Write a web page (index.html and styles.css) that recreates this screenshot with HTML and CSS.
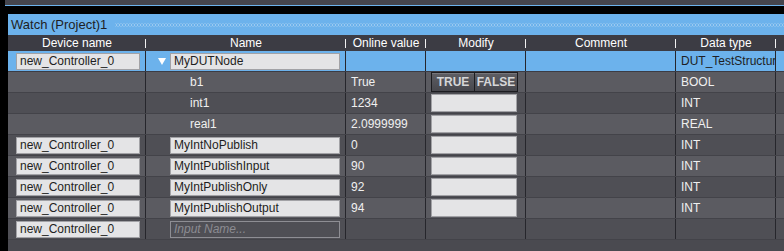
FILE: index.html
```html
<!DOCTYPE html>
<html>
<head>
    <title>Watch (Project)1</title>
    <link rel="stylesheet" href="styles.css">
</head>
<body>
    <div class="topbar"></div>
    <div class="watch">
        <div class="title">
            <span>Watch (Project)1</span>
            <div class="grip"></div>
        </div>

        <div class="row head">
            <div class="cell">Device name</div>
            <div class="cell">Name</div>
            <div class="cell">Online value</div>
            <div class="cell">Modify</div>
            <div class="cell">Comment</div>
            <div class="cell">Data type</div>
            <div class="cell"></div>
        </div>

        <div class="row selected">
            <div class="cell"><div class="box dev">new_Controller_0</div></div>
            <div class="cell name"><span class="tri"></span><div class="box nm">MyDUTNode</div></div>
            <div class="cell"></div>
            <div class="cell"></div>
            <div class="cell"></div>
            <div class="cell type">DUT_TestStructure</div>
            <div class="cell"></div>
        </div>

        <div class="row light">
            <div class="cell"></div>
            <div class="cell child">b1</div>
            <div class="cell val">True</div>
            <div class="cell mod">
                <button class="btn">TRUE</button><button class="btn">FALSE</button>
            </div>
            <div class="cell"></div>
            <div class="cell type">BOOL</div>
            <div class="cell"></div>
        </div>

        <div class="row dark">
            <div class="cell"></div>
            <div class="cell child">int1</div>
            <div class="cell val">1234</div>
            <div class="cell mod"><div class="box edit"></div></div>
            <div class="cell"></div>
            <div class="cell type">INT</div>
            <div class="cell"></div>
        </div>

        <div class="row light">
            <div class="cell"></div>
            <div class="cell child">real1</div>
            <div class="cell val">2.0999999</div>
            <div class="cell mod"><div class="box edit"></div></div>
            <div class="cell"></div>
            <div class="cell type">REAL</div>
            <div class="cell"></div>
        </div>

        <div class="row dark">
            <div class="cell"><div class="box dev">new_Controller_0</div></div>
            <div class="cell name"><div class="box nm">MyIntNoPublish</div></div>
            <div class="cell val">0</div>
            <div class="cell mod"><div class="box edit"></div></div>
            <div class="cell"></div>
            <div class="cell type">INT</div>
            <div class="cell"></div>
        </div>

        <div class="row light">
            <div class="cell"><div class="box dev">new_Controller_0</div></div>
            <div class="cell name"><div class="box nm">MyIntPublishInput</div></div>
            <div class="cell val">90</div>
            <div class="cell mod"><div class="box edit"></div></div>
            <div class="cell"></div>
            <div class="cell type">INT</div>
            <div class="cell"></div>
        </div>

        <div class="row dark">
            <div class="cell"><div class="box dev">new_Controller_0</div></div>
            <div class="cell name"><div class="box nm">MyIntPublishOnly</div></div>
            <div class="cell val">92</div>
            <div class="cell mod"><div class="box edit"></div></div>
            <div class="cell"></div>
            <div class="cell type">INT</div>
            <div class="cell"></div>
        </div>

        <div class="row light">
            <div class="cell"><div class="box dev">new_Controller_0</div></div>
            <div class="cell name"><div class="box nm">MyIntPublishOutput</div></div>
            <div class="cell val">94</div>
            <div class="cell mod"><div class="box edit"></div></div>
            <div class="cell"></div>
            <div class="cell type">INT</div>
            <div class="cell"></div>
        </div>

        <div class="row dark">
            <div class="cell"><div class="box dev">new_Controller_0</div></div>
            <div class="cell name"><div class="box nm empty">Input Name...</div></div>
            <div class="cell"></div>
            <div class="cell"></div>
            <div class="cell"></div>
            <div class="cell"></div>
            <div class="cell"></div>
        </div>
    </div>
</body>
</html>
```

FILE: styles.css
```css
body {
    margin: 0;
    background: #000;
    font-family: "Liberation Sans", Arial, sans-serif;
    font-size: 12px;
    height: 251px;
    overflow: hidden;
}

.topbar {
    margin-left: 5px;
    height: 5px;
    background: #45454d;
    border-bottom: 1px solid #6cb2ec;
}

.watch {
    margin: 8px 0 0 8px;
    background: #4a4a50;
    height: 237px;
}

.title {
    height: 21px;
    background: #6cb2ec;
    display: flex;
    align-items: center;
    color: #1e1e24;
    padding-left: 3px;
}
.title span {
    font-size: 13px;
}
.grip {
    flex: 1;
    height: 4px;
    margin: 1px 0 0 8px;
    background-image:
        radial-gradient(circle, #9ccaf0 0.8px, transparent 0.9px),
        radial-gradient(circle, #9ccaf0 0.8px, transparent 0.9px);
    background-size: 3px 4px;
    background-position: 0 0, 1.5px 2px;
}

.row {
    display: grid;
    grid-template-columns: 138px 200px 80px 100px 150px 100px 8px;
    height: 20px;
    border-bottom: 1px solid #434349;
    color: #f0f0f0;
}
.cell {
    border-right: 1px solid #26262c;
    display: flex;
    align-items: center;
    white-space: nowrap;
    overflow: hidden;
}
.cell:last-child {
    border-right: none;
}

.row.head {
    height: 16px;
    background: #3c3c44;
    border-bottom: none;
}
.row.head .cell {
    justify-content: center;
    border-right: none;
    position: relative;
    color: #fff;
}
.row.head .cell::after {
    content: "";
    position: absolute;
    right: 0;
    top: 4px;
    width: 1px;
    height: 9px;
    background: #f0f0f0;
}
.row.head .cell:last-child::after {
    display: none;
}

.row.selected {
    background: #6cb2ec;
    color: #1e1e24;
    border-bottom: 1px solid #3c3c44;
}
.row.light {
    background: #5b5b61;
}
.row.dark {
    background: #4f4f55;
}

.box {
    height: 15px;
    line-height: 15px;
    background: #e4e4e6;
    border: 1px solid #a2a2a6;
    color: #1e1e22;
    padding-left: 3px;
    box-sizing: content-box;
    overflow: hidden;
}
.box.dev {
    margin-left: 8px;
    width: 119px;
}
.name {
    padding-left: 24px;
    position: relative;
}
.box.nm {
    width: 165px;
}
.box.empty {
    background: transparent;
    border-color: #8e8e94;
    color: #8c8c92;
    font-style: italic;
}
.tri {
    position: absolute;
    left: 12px;
    top: 7px;
    width: 0;
    height: 0;
    border-left: 4px solid transparent;
    border-right: 4px solid transparent;
    border-top: 7px solid #fff;
}

.child {
    padding-left: 44px;
}
.val {
    padding-left: 5px;
}
.type {
    padding-left: 5px;
}

.mod {
    padding-left: 5px;
}
.box.edit {
    width: 84px;
    padding: 0;
    height: 16px;
}
.btn {
    height: 20px;
    margin: 0;
    padding: 0;
    width: 44px;
    font-family: inherit;
    font-size: 12px;
    font-weight: bold;
    color: #d6d6d8;
    background: linear-gradient(#5e5e64, #47474d);
    border: 1px solid #1c1c20;
    box-shadow: inset 0 1px 0 #76767c;
}
.btn + .btn {
    border-left: none;
    width: 43px;
}
```
